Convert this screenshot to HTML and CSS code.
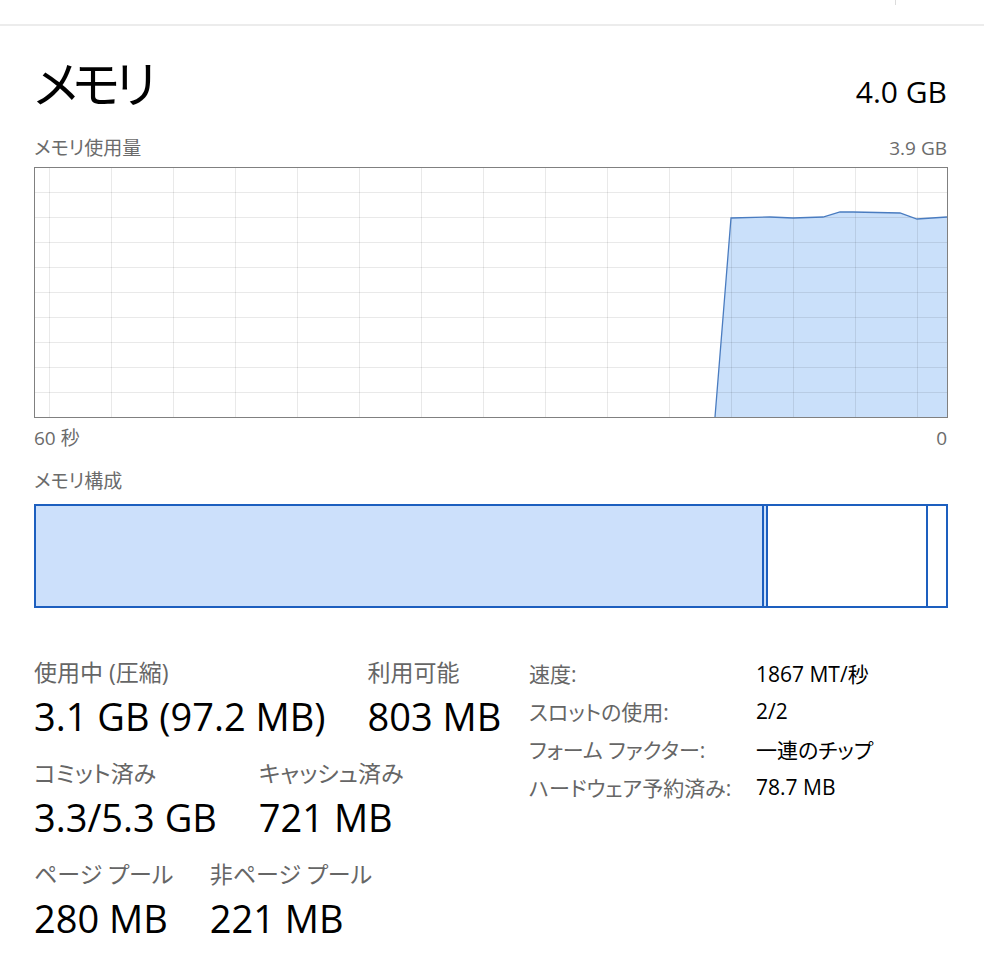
FILE: index.html
```html
<!DOCTYPE html>
<html lang="ja">
<head>
  <meta charset="UTF-8">
  <meta name="viewport" content="width=device-width, initial-scale=1.0">
  <title>メモリ</title>
  <link rel="stylesheet" href="styles.css">
</head>
<body>

<div class="topbar"><span class="tick"></span></div>

<div id="panel">
  <div class="title-row">
    <h1>メモリ</h1>
    <span class="total">4.0 GB</span>
  </div>

  <div class="caption-row">
    <span>メモリ使用量</span>
    <span>3.9 GB</span>
  </div>

  <div class="graph">
    <svg width="912" height="249" viewBox="0 0 912 249">
      <!-- 使用量の折れ線 -->
      <polygon class="area" points="680,249 696,50 735,49 758,50 788,49 805,44 818,44 865,45 882,51 912,49 912,249"></polygon>
      <g class="grid">
        <line x1="0" y1="24" x2="912" y2="24"></line>
        <line x1="0" y1="49" x2="912" y2="49"></line>
        <line x1="0" y1="74" x2="912" y2="74"></line>
        <line x1="0" y1="99" x2="912" y2="99"></line>
        <line x1="0" y1="124" x2="912" y2="124"></line>
        <line x1="0" y1="149" x2="912" y2="149"></line>
        <line x1="0" y1="174" x2="912" y2="174"></line>
        <line x1="0" y1="199" x2="912" y2="199"></line>
        <line x1="0" y1="224" x2="912" y2="224"></line>
        <line x1="14" y1="0" x2="14" y2="249"></line>
        <line x1="76" y1="0" x2="76" y2="249"></line>
        <line x1="138" y1="0" x2="138" y2="249"></line>
        <line x1="200" y1="0" x2="200" y2="249"></line>
        <line x1="262" y1="0" x2="262" y2="249"></line>
        <line x1="324" y1="0" x2="324" y2="249"></line>
        <line x1="386" y1="0" x2="386" y2="249"></line>
        <line x1="448" y1="0" x2="448" y2="249"></line>
        <line x1="510" y1="0" x2="510" y2="249"></line>
        <line x1="572" y1="0" x2="572" y2="249"></line>
        <line x1="634" y1="0" x2="634" y2="249"></line>
        <line x1="696" y1="0" x2="696" y2="249"></line>
        <line x1="758" y1="0" x2="758" y2="249"></line>
        <line x1="820" y1="0" x2="820" y2="249"></line>
        <line x1="882" y1="0" x2="882" y2="249"></line>
      </g>
      <polyline class="line" points="680,249 696,50 735,49 758,50 788,49 805,44 818,44 865,45 882,51 912,49"></polyline>
    </svg>
  </div>

  <div class="caption-row axis">
    <span>60 秒</span>
    <span>0</span>
  </div>

  <div class="caption">メモリ構成</div>

  <div class="composition">
    <div class="seg in-use"></div>
    <div class="seg modified"></div>
    <div class="seg standby"></div>
    <div class="seg free"></div>
  </div>

  <div class="stats">
    <div class="stats-left">
      <div class="stat-row">
        <div class="stat">
          <div class="stat-label">使用中 (圧縮)</div>
          <div class="stat-value">3.1 GB (97.2 MB)</div>
        </div>
        <div class="stat">
          <div class="stat-label">利用可能</div>
          <div class="stat-value">803 MB</div>
        </div>
      </div>
      <div class="stat-row">
        <div class="stat">
          <div class="stat-label">コミット済み</div>
          <div class="stat-value">3.3/5.3 GB</div>
        </div>
        <div class="stat">
          <div class="stat-label">キャッシュ済み</div>
          <div class="stat-value">721 MB</div>
        </div>
      </div>
      <div class="stat-row">
        <div class="stat">
          <div class="stat-label">ページ プール</div>
          <div class="stat-value">280 MB</div>
        </div>
        <div class="stat">
          <div class="stat-label">非ページ プール</div>
          <div class="stat-value">221 MB</div>
        </div>
      </div>
    </div>

    <div class="stats-right">
      <span class="key">速度:</span><span class="val">1867 MT/秒</span>
      <span class="key">スロットの使用:</span><span class="val">2/2</span>
      <span class="key">フォーム ファクター:</span><span class="val">一連のチップ</span>
      <span class="key">ハードウェア予約済み:</span><span class="val">78.7 MB</span>
    </div>
  </div>
</div>

</body>
</html>
```

FILE: styles.css
```css
body {
  font-family: 'Open Sans', 'Noto Sans CJK JP', sans-serif;
  font-feature-settings: "palt";
  margin: 0;
  padding: 0;
  background-color: #ffffff;
  color: #000000;
}

.topbar {
  position: relative;
  height: 24px;
  border-bottom: 2px solid #ececec;
}

.tick {
  position: absolute;
  top: 0;
  left: 895px;
  width: 1px;
  height: 5px;
  background-color: #dcdcdc;
}

#panel {
  padding: 0 37px 0 34px;
}

.title-row {
  display: flex;
  justify-content: space-between;
  align-items: baseline;
  margin-top: 28px;
  height: 60px;
}

.title-row h1 {
  margin: 0;
  font-size: 50px;
  font-weight: normal;
  line-height: 60px;
  letter-spacing: -5px;
}

.total {
  font-size: 30px;
  line-height: 60px;
}

.caption-row {
  display: flex;
  justify-content: space-between;
  margin-top: 22px;
  font-size: 19px;
  line-height: 24px;
  color: #6b6b6b;
}

.graph {
  margin-top: 7px;
  width: 912px;
  height: 249px;
  border: 1px solid #808080;
}

.graph svg {
  display: block;
}

.graph .area {
  fill: #cae0fa;
}

.graph .grid line {
  stroke: rgba(0, 0, 0, 0.085);
  stroke-width: 1;
  shape-rendering: crispEdges;
}

.graph .line {
  fill: none;
  stroke: #4a7cc0;
  stroke-width: 1.3;
}

.caption-row.axis {
  margin-top: 8px;
}

.caption {
  margin-top: 19px;
  font-size: 19px;
  line-height: 24px;
  color: #6b6b6b;
}

.composition {
  display: flex;
  margin-top: 11px;
  width: 910px;
  height: 100px;
  border: 2px solid #1d5fbf;
}

.seg {
  border-right: 2px solid #1d5fbf;
}

.seg.in-use {
  width: 726px;
  background-color: #cce0fb;
}

.seg.modified {
  width: 2px;
  background-color: #cce0fb;
}

.seg.standby {
  width: 158px;
}

.seg.free {
  flex: 1;
  border-right: none;
}

.stats {
  display: flex;
  margin-top: 46px;
}

.stats-left {
  width: 495px;
  padding-top: 3px;
}

.stat-row {
  display: flex;
  gap: 42px;
  margin-bottom: 19px;
}

/* 列幅は値の幅で決まる */
.stat-label {
  width: 0;
  white-space: nowrap;
  font-size: 23px;
  line-height: 30px;
  color: #666666;
}

.stat-value {
  font-size: 38px;
  line-height: 46px;
  margin-top: 6px;
  white-space: nowrap;
}

.stats-right {
  display: grid;
  grid-template-columns: 227px auto;
  grid-auto-rows: 38px;
  align-items: center;
  align-self: flex-start;
  font-size: 21px;
}

.stats-right .key {
  color: #666666;
}
```
